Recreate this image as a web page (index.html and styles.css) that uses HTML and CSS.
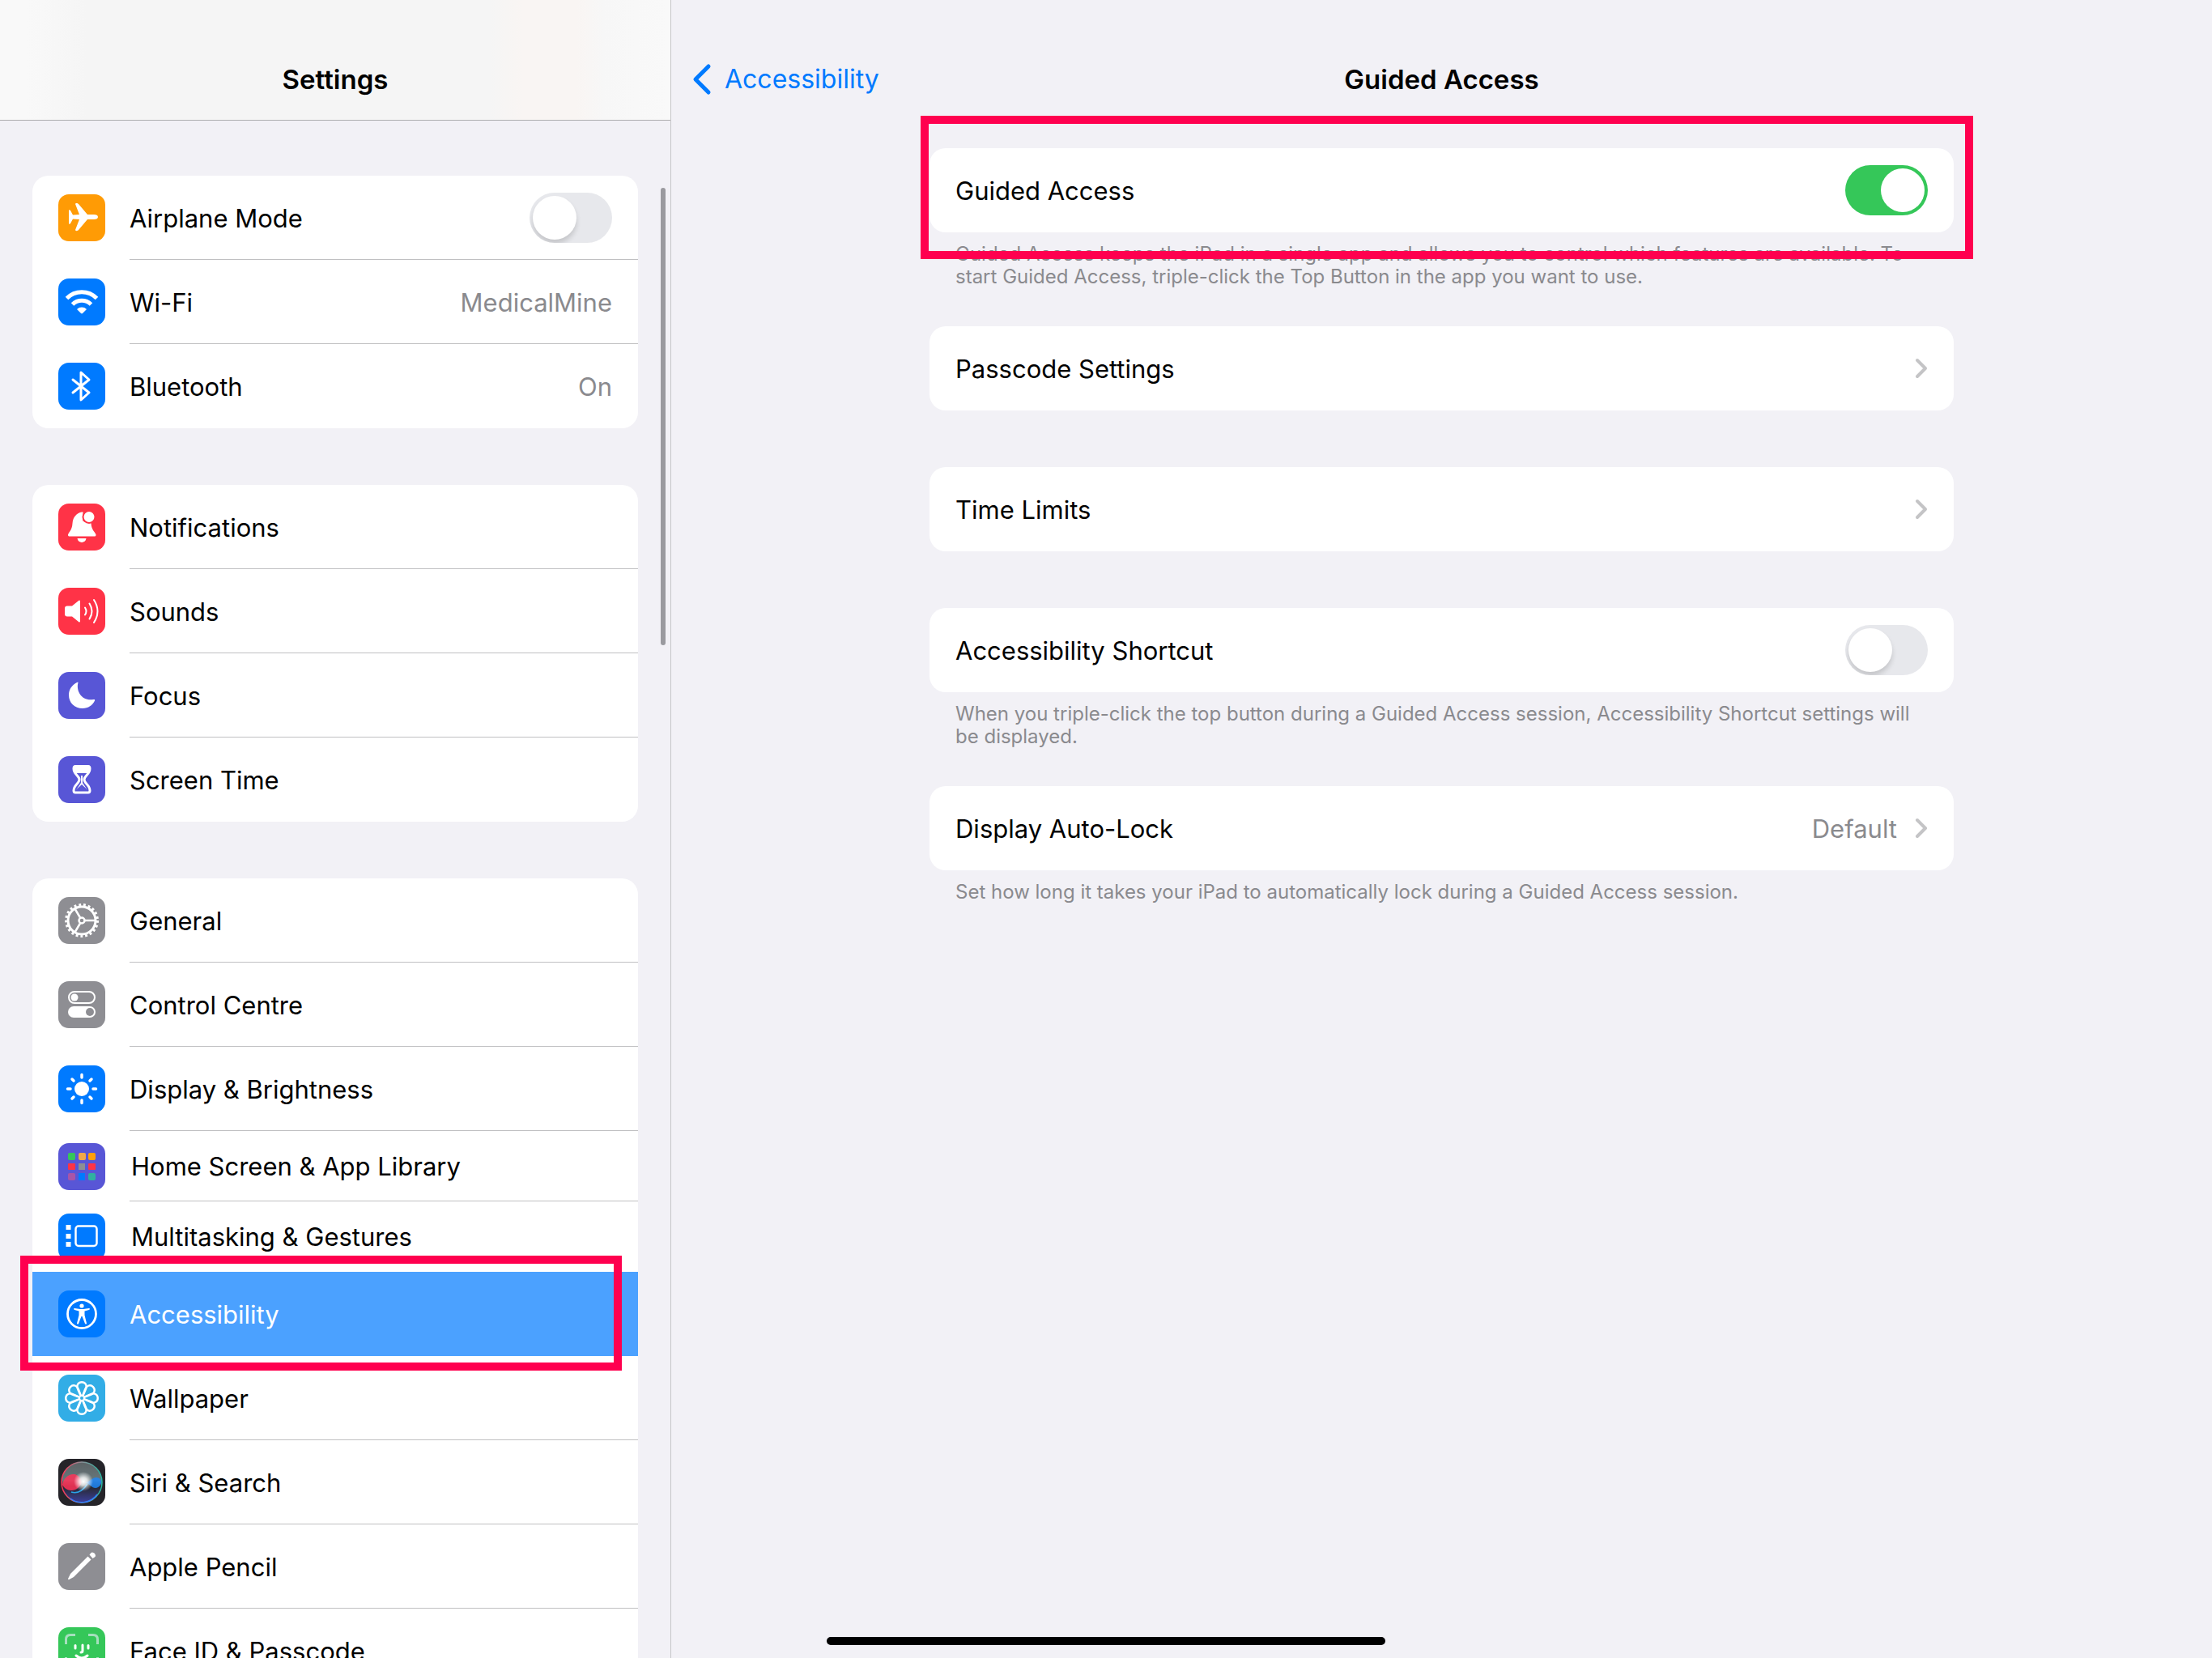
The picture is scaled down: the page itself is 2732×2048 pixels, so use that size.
FILE: index.html
```html
<!DOCTYPE html>
<html lang="en-GB">
<head>
  <meta charset="UTF-8" />
  <meta name="viewport" content="width=device-width, initial-scale=1.0"/>
  <title>Settings - Guided Access</title>
  <link rel="stylesheet" href="styles.css">
</head>
<body>
  <aside class="sidebar">
    <header class="sidebar-header">
      <h1>Settings</h1>
    </header>
    <div class="scrollbar"></div>

    <nav class="sidebar-list">
      <ul class="card">
        <li class="row">
          <svg class="icon orange" viewBox="0 0 58 58"><path fill="#fff" d="M49 28c0 2-2 3-5 3h-8L25 44c-1 1.500-4 1.500-4 0l5-13-8-.5-3 5.500c-.5 1-2 1-2 0V20c0-1 1.500-1 2 0l3 5.500 8-.5-5-13c0-1.500 3-1.500 4 0l11 13h8c3 0 5 1 5 3z"/></svg>
          <label class="row-body" for="airplane"><span>Airplane Mode</span></label>
          <input class="switch" type="checkbox" id="airplane" />
        </li>
        <li><a class="row" href="#wifi">
          <svg class="icon blue" viewBox="0 0 58 58"><g fill="none" stroke="#fff" stroke-width="5"><path d="M10.500 24.500a26 26 0 0 1 37 0"/><path d="M17.500 32a16.500 16.500 0 0 1 23 0"/></g><path fill="#fff" d="M23 38a8.500 8.500 0 0 1 12 0l-5 5a1.500 1.500 0 0 1-2 0z"/></svg>
          <span class="row-body"><span>Wi-Fi</span><span class="value">MedicalMine</span></span>
        </a></li>
        <li><a class="row" href="#bluetooth">
          <svg class="icon blue" viewBox="0 0 58 58"><path class="line" stroke-width="3" d="M18 21l20 16-10 9V12l10 9-20 16"/></svg>
          <span class="row-body"><span>Bluetooth</span><span class="value">On</span></span>
        </a></li>
      </ul>

      <ul class="card">
        <li><a class="row" href="#notifications">
          <svg class="icon red" viewBox="0 0 58 58"><path fill="#fff" d="M29 10.500c-6 1-11 6-11.500 14C17 33 13 35 12 38.500c0 1.500.5 2 2 2h30.500c1.500 0 2-.5 2-2C45.500 35 41 33 40.500 24.500V22h-10V10.500z"/><path fill="#fff" d="M23.500 43h11c-1 6.500-10 6.500-11 0z"/><circle cx="38" cy="16.500" r="8.500" fill="#ff3347"/><circle cx="38" cy="16.500" r="6.500" fill="#fff"/></svg>
          <span class="row-body"><span>Notifications</span></span>
        </a></li>
        <li><a class="row" href="#sounds">
          <svg class="icon red" viewBox="0 0 58 58"><path fill="#fff" d="M11 22.500h6l8-6.500c1-1 2-.5 2 1v24c0 1.500-1 2-2 1l-8-6.500h-6c-2 0-3-1-3-3v-7c0-2 1-3 3-3z"/><g class="line" stroke-width="2"><path d="M33 24.500q3 4.500 0 9"/><path d="M38.500 19.500q6 9.500 0 19"/><path d="M44 15q9 14 0 28"/></g></svg>
          <span class="row-body"><span>Sounds</span></span>
        </a></li>
        <li><a class="row" href="#focus">
          <svg class="icon indigo" viewBox="0 0 58 58"><path fill="#fff" d="M24.500 13c-3 11 5 23.500 19 21 1.500-.3 2 .3 1.500 1.500C42.500 41 37 45 30 45c-10 0-17-7-17-16.500 0-7 4-12.500 10-15.500 1-.5 1.800-.5 1.500 0z"/></svg>
          <span class="row-body"><span>Focus</span></span>
        </a></li>
        <li><a class="row" href="#screentime">
          <svg class="icon indigo" viewBox="0 0 58 58"><path class="line" stroke-width="3" d="M21 12.500h16q2 0 2 3c0 7-7 9-7 13.500s7 6.500 7 13.500q0 2.500-2 2.500H21q-2 0-2-2.500c0-7 7-9 7-13.500s-7-6.500-7-13.500q0-3 2-3z"/><path fill="#fff" d="M20 13h18v5q-1 2-2 3H22q-1-1-2-3zM28 24h2v9l6 9v2H22v-2l6-9z"/><path fill="#5856d6" d="M29 35l7 6.500q1 2-1 2H23q-2 0-1-2z"/></svg>
          <span class="row-body"><span>Screen Time</span></span>
        </a></li>
      </ul>

      <ul class="card">
        <li><a class="row" href="#general">
          <svg class="icon grey" viewBox="0 0 58 58"><g fill="none" stroke="#fff"><circle cx="29" cy="29" r="17" stroke-width="3"/><circle cx="29" cy="29" r="19" stroke-width="4" stroke-dasharray="2.800 2.885"/><circle cx="29" cy="29" r="3.500" stroke-width="2.500"/><path stroke-width="2.500" d="M33 29h13M27 25.500l-6.500-11M27 32.500l-6.500 11"/></g></svg>
          <span class="row-body"><span>General</span></span>
        </a></li>
        <li><a class="row" href="#control">
          <svg class="icon grey" viewBox="0 0 58 58"><rect x="13" y="13" width="32" height="14" rx="7" fill="none" stroke="#fff" stroke-width="2"/><circle cx="20" cy="20" r="4.500" fill="#fff"/><rect x="12" y="31" width="34" height="14" rx="7" fill="#fff"/><circle cx="39" cy="38" r="5" fill="#8e8e93"/></svg>
          <span class="row-body"><span>Control Centre</span></span>
        </a></li>
        <li><a class="row" href="#display">
          <svg class="icon blue" viewBox="0 0 58 58"><circle cx="29" cy="29" r="9" fill="#fff"/><path class="line" stroke-width="3.500" d="M29 11.500v3.500M29 43v3.500M11.500 29H15M43 29h3.500M17 17l2 2M39 39l2 2M17 41l2-2M39 19l2-2"/></svg>
          <span class="row-body"><span>Display &amp; Brightness</span></span>
        </a></li>
        <li><a class="row compact" href="#home">
          <svg class="icon indigo" viewBox="0 0 58 58"><rect x="12" y="12" width="9" height="9" rx="2" fill="#35c759"/><rect x="25" y="12" width="9" height="9" rx="2" fill="#f0a848"/><rect x="37" y="12" width="9" height="9" rx="2" fill="#ff9f0a"/><rect x="12" y="25" width="9" height="8" rx="1" fill="#ff3347"/><rect x="25" y="25" width="8" height="8" fill="#8e8e93"/><rect x="37" y="25" width="9" height="8" rx="1" fill="#ff3347"/><rect x="12" y="37" width="9" height="9" rx="2" fill="#a855a8"/><rect x="25" y="37" width="8" height="9" fill="#007aff"/><rect x="37" y="37" width="9" height="9" rx="2" fill="#30b0a0"/></svg>
          <span class="row-body"><span>Home Screen &amp; App Library</span></span>
        </a></li>
        <li><a class="row compact last-line" href="#multitasking">
          <svg class="icon blue" viewBox="0 0 58 58"><path fill="#fff" d="M9.500 14h6v6h-6zM9.500 25h6v6h-6zM9.500 35h6v6h-6z"/><rect x="21.500" y="15.500" width="26" height="24.500" rx="3.500" fill="none" stroke="#fff" stroke-width="2.500"/></svg>
          <span class="row-body"><span>Multitasking &amp; Gestures</span></span>
        </a></li>
        <li class="marked"><a class="row selected last-line" href="#accessibility" aria-current="page">
          <svg class="icon blue" viewBox="0 0 58 58"><circle cx="29" cy="29" r="17.500" fill="none" stroke="#fff" stroke-width="2.800"/><circle cx="29" cy="19" r="2.600" fill="#fff"/><path fill="#fff" d="M20 22l7 1h4l7-1c1.200 0 1.200 1.600 0 2L32.500 25.500v5l2.500 10c.2 1.200-1.500 1.500-2 .5L29.500 32h-1L25 41c-.5 1-2.200.7-2-.5l2.500-10v-5L20 24c-1.200-.4-1.200-2 0-2z"/></svg>
          <span class="row-body"><span>Accessibility</span></span>
        </a>
        <span class="highlight highlight-menu"></span></li>
        <li><a class="row" href="#wallpaper">
          <svg class="icon cyan" viewBox="0 0 58 58">
            <defs><path id="petal" d="M29 29l-4.500-10c-6-13 15-13 9 0z"/></defs>
            <g fill="none" stroke="#fff" stroke-width="2.400" stroke-linejoin="round">
              <use href="#petal"/><use href="#petal" transform="rotate(45 29 29)"/><use href="#petal" transform="rotate(90 29 29)"/><use href="#petal" transform="rotate(135 29 29)"/><use href="#petal" transform="rotate(180 29 29)"/><use href="#petal" transform="rotate(225 29 29)"/><use href="#petal" transform="rotate(270 29 29)"/><use href="#petal" transform="rotate(315 29 29)"/>
            </g>
            <circle cx="29" cy="29" r="2" fill="#32ade6"/>
          </svg>
          <span class="row-body"><span>Wallpaper</span></span>
        </a></li>
        <li><a class="row" href="#siri">
          <svg class="icon black" viewBox="0 0 58 58">
            <defs>
              <radialGradient id="glow"><stop offset="0" stop-color="#fff"/><stop offset=".4" stop-color="#fff" stop-opacity=".8"/><stop offset="1" stop-color="#fff" stop-opacity="0"/></radialGradient>
              <linearGradient id="orb" x2="0" y2="1"><stop offset="0" stop-color="#5d6366"/><stop offset=".45" stop-color="#66777a"/><stop offset=".6" stop-color="#26282c"/><stop offset="1" stop-color="#3c3f9c"/></linearGradient>
              <linearGradient id="rim"><stop offset="0" stop-color="#ff3355"/><stop offset=".5" stop-color="#8a8f96"/><stop offset="1" stop-color="#25b5a0"/></linearGradient>
            </defs>
            <circle cx="29" cy="29" r="25" fill="url(#orb)" stroke="url(#rim)" stroke-width="1.500"/>
            <path fill="#ff3358" opacity=".85" d="M5 32c1-8 8-14 15-13 5 1 8 6 9 10-2 6-7 10-13 10-5 0-9-3-11-7z"/>
            <path fill="#1f86f5" opacity=".85" d="M33 29c6 0 8-6 14-6 4 0 6 3 6 6s-3 7-7 7c-5 0-7-5-13-7z"/>
            <path fill="none" stroke="#2aa3e8" stroke-width="1.500" d="M16 41c10 3 16-4 20-10"/>
            <path fill="none" stroke="#2f7bff" stroke-width="1.500" d="M15 49c9 7 24 7 33-5"/>
            <circle cx="31" cy="28" r="12" fill="url(#glow)"/>
          </svg>
          <span class="row-body"><span>Siri &amp; Search</span></span>
        </a></li>
        <li><a class="row" href="#pencil">
          <svg class="icon grey" viewBox="0 0 58 58"><path fill="#fff" d="M36.500 16.500l4 4L19 42l-5.500 3c-1 .5-1.800-.3-1.300-1.300L15 38z"/><path fill="#fff" d="M38.500 14.500l2-2.500c2-2 7 2 5 5l-3 2z"/></svg>
          <span class="row-body"><span>Apple Pencil</span></span>
        </a></li>
        <li><a class="row" href="#faceid">
          <svg class="icon green" viewBox="0 0 58 58"><g fill="none" stroke="#a5dfbd" stroke-width="3"><path d="M9.500 21v-6q0-5.500 5.500-5.500h6M37 9.500h6q5.500 0 5.500 5.500v6M9.500 37v6q0 5.500 5.500 5.500h6M37 48.500h6q5.500 0 5.500-5.500v-6"/></g><path class="line" stroke-width="3" d="M21 22.500v3.500M37 22.500v3.500M30 22v7q0 2-2 2M22 35q7 6 14 0"/></svg>
          <span class="row-body"><span>Face ID &amp; Passcode</span></span>
        </a></li>
      </ul>
    </nav>
  </aside>

  <main class="detail">
    <header class="detail-header">
      <a class="back" href="#accessibility">
        <svg viewBox="0 0 24 40"><path d="M20 4L4 20l16 16"/></svg>
        <span>Accessibility</span>
      </a>
      <h2>Guided Access</h2>
    </header>

    <div class="options">
      <section class="marked">
        <div class="card row option">
          <label for="guided">Guided Access</label>
          <input class="switch" type="checkbox" id="guided" checked />
        </div>
        <p class="note">Guided Access keeps the iPad in a single app and allows you to control which features are available. To start Guided Access, triple-click the Top Button in the app you want to use.</p>
        <span class="highlight highlight-option"></span>
      </section>

      <section>
        <a class="card row option" href="#passcode">
          <span>Passcode Settings</span>
          <svg class="chevron" viewBox="0 0 16 26"><path d="M3 3l10 10L3 23"/></svg>
        </a>
      </section>

      <section>
        <a class="card row option" href="#limits">
          <span>Time Limits</span>
          <svg class="chevron" viewBox="0 0 16 26"><path d="M3 3l10 10L3 23"/></svg>
        </a>
      </section>

      <section>
        <div class="card row option">
          <label for="shortcut">Accessibility Shortcut</label>
          <input class="switch" type="checkbox" id="shortcut" />
        </div>
        <p class="note">When you triple-click the top button during a Guided Access session, Accessibility Shortcut settings will be displayed.</p>
      </section>

      <section>
        <a class="card row option" href="#autolock">
          <span>Display Auto-Lock</span>
          <span class="value">Default</span>
          <svg class="chevron" viewBox="0 0 16 26"><path d="M3 3l10 10L3 23"/></svg>
        </a>
        <p class="note">Set how long it takes your iPad to automatically lock during a Guided Access session.</p>
      </section>
    </div>

    <div class="home-indicator"></div>
  </main>
</body>
</html>
```
FILE: styles.css
```css
* {
  box-sizing: border-box;
}
body {
  margin: 0;
  height: 100vh;
  overflow: hidden;
  display: flex;
  background-color: #f2f1f6;
  font-family: Inter, "Liberation Sans", sans-serif;
  font-size: 31px;
  line-height: 40px;
  color: #000;
}
a {
  color: inherit;
  text-decoration: none;
}
ul {
  list-style: none;
  margin: 0;
  padding: 0;
}
h1, h2 {
  margin: 0;
  font-size: 33px;
  font-weight: 600;
  line-height: 40px;
}

/* sidebar */
.sidebar {
  position: relative;
  flex: 0 0 829px;
  border-right: 1px solid #c6c6c8;
}
.sidebar-header {
  height: 149px;
  padding-top: 78px;
  border-bottom: 1px solid #adadaf;
  background: linear-gradient(90deg, #f9f9f9 0%, #f9f9f9 4%, #f5f5f5 13%, #f5f5f5 73%, #f9f5f3 78%, #f9f5f3 86%, #f7f7f7 90%, #f9f9f9 100%);
  text-align: center;
}
.scrollbar {
  position: absolute;
  top: 232px;
  right: 6px;
  width: 6px;
  height: 565px;
  border-radius: 3px;
  background-color: #9a9a9f;
}
.sidebar-list {
  display: flex;
  flex-direction: column;
  gap: 70px;
  padding: 68px 40px 0;
}
.card {
  background-color: #fff;
  border-radius: 20px;
}
.row {
  position: relative;
  display: flex;
  align-items: center;
  height: 104px;
  padding: 0 32px;
}
.row-body {
  flex: 1;
  display: flex;
  justify-content: space-between;
  margin-left: 30px;
  padding-top: 2px;
}
/* separator starts under the text and runs to the card edge */
.sidebar .row::after {
  content: "";
  position: absolute;
  left: 120px;
  right: 0;
  bottom: 0;
  height: 1px;
  background-color: #c0c0c2;
}
.sidebar li:last-child .row::after,
.sidebar .last-line::after {
  display: none;
}
.compact {
  height: 87px;
}
.compact .row-body {
  margin-left: 32px;
  padding-top: 0;
}
.selected {
  background-color: #4ba1ff;
  color: #fff;
}
.value {
  color: #8a8a8e;
}

/* icons */
.icon {
  flex: none;
  width: 58px;
  height: 58px;
  border-radius: 13px;
}
.icon .line {
  fill: none;
  stroke: #fff;
  stroke-linecap: round;
  stroke-linejoin: round;
}
.orange { background-color: #ff9b05; }
.blue { background-color: #007aff; }
.red { background-color: #ff3347; }
.indigo { background-color: #5856d6; }
.grey { background-color: #8e8e93; }
.cyan { background-color: #32ade6; }
.black { background-color: #252429; }
.green { background-color: #35c759; }

/* switch */
.switch {
  appearance: none;
  position: relative;
  flex: none;
  width: 102px;
  height: 62px;
  margin: 0;
  border-radius: 31px;
  background-color: #e7e8ec;
  overflow: hidden;
}
.switch::before {
  content: "";
  position: absolute;
  top: 4px;
  left: 4px;
  width: 54px;
  height: 54px;
  border-radius: 50%;
  background-color: #fff;
  box-shadow: 0 5px 6px rgba(0, 0, 0, 0.15);
}
.switch:checked {
  background-color: #35c759;
}
.switch:checked::before {
  left: 44px;
  box-shadow: none;
}

/* detail pane */
.detail {
  position: relative;
  flex: 1;
}
.detail-header {
  position: relative;
  height: 149px;
  padding-top: 78px;
  text-align: center;
}
.back {
  position: absolute;
  top: 78px;
  left: 26px;
  display: flex;
  align-items: center;
  gap: 16px;
  font-size: 32px;
  color: #007aff;
}
.back svg {
  width: 24px;
  height: 40px;
  fill: none;
  stroke: #007aff;
  stroke-width: 5;
  stroke-linecap: round;
  stroke-linejoin: round;
}
.options {
  max-width: 1265px;
  margin: 0 auto;
  padding-top: 34px;
}
.options section {
  margin-bottom: 70px;
}
.options section:has(.note) {
  margin-bottom: 47px;
}
.option {
  justify-content: space-between;
}
.option label,
.option span {
  padding-top: 2px;
}
.option .value {
  margin-left: auto;
  margin-right: 22px;
}
.chevron {
  width: 16px;
  height: 26px;
  fill: none;
  stroke: #c4c4c6;
  stroke-width: 4;
  stroke-linecap: round;
  stroke-linejoin: round;
}
.note {
  margin: 0;
  padding: 13px 32px 0;
  font-size: 24px;
  line-height: 28px;
  color: #8a8a8e;
}
.home-indicator {
  position: absolute;
  left: 192px;
  bottom: 16px;
  width: 690px;
  height: 10px;
  border-radius: 5px;
  background-color: #000;
}

/* red frames over the two items to tap */
.marked {
  position: relative;
  z-index: 1;
}
.highlight {
  position: absolute;
  border: 10px solid #ff004f;
  pointer-events: none;
}
.highlight-menu {
  top: -20px;
  bottom: -18px;
  left: -15px;
  right: 20px;
}
.highlight-option {
  top: -40px;
  left: -11px;
  right: -24px;
  height: 177px;
}
```
